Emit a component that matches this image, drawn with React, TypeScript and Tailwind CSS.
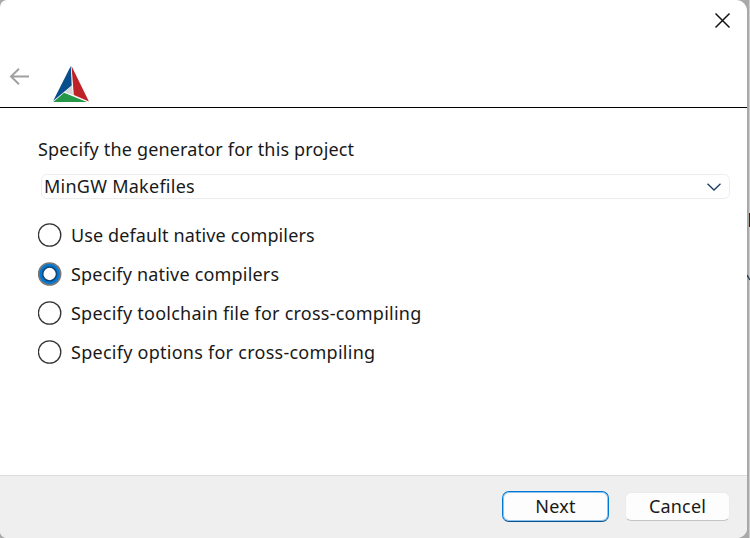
const options = [
  { label: 'Use default native compilers', spacing: 'tracking-[0.12px]' },
  { label: 'Specify native compilers', spacing: 'tracking-[0.19px]' },
  { label: 'Specify toolchain file for cross-compiling', spacing: 'tracking-[0.24px]' },
  { label: 'Specify options for cross-compiling', spacing: 'tracking-[0.26px]' },
];

function Radio({ checked }: { checked: boolean }) {
  return (
    <svg className="h-6 w-6 shrink-0" viewBox="0 0 24 24" fill="none">
      {checked ? (
        <>
          <circle cx="11.6" cy="12" r="11" fill="#0078d4" stroke="#7a7874" strokeWidth="1.7" />
          <circle cx="11.6" cy="12" r="6.9" fill="#fff" stroke="#124573" strokeWidth="1.5" />
        </>
      ) : (
        <circle cx="11.6" cy="12" r="11.2" fill="#fff" stroke="#333" strokeWidth="1.3" />
      )}
    </svg>
  );
}

export default function App() {
  return (
    <div className="relative h-[538px] w-[750px] overflow-hidden bg-linear-to-r from-[#a9a9a9] from-[749px] to-[#cfcfcf] to-[749px] font-['Noto_Sans','Open_Sans',sans-serif] text-[18px] leading-6 text-[#191919]">
      <div className="flex h-full w-[747px] flex-col overflow-hidden rounded-tl-[7px] rounded-tr-[11px] rounded-br-[10px] rounded-bl-[7px] bg-white">
        <header className="flex h-[108px] shrink-0 flex-col justify-between border-b border-black">
          <div className="flex justify-end pt-[12px] pr-[16px]">
            <svg className="h-[17px] w-4" viewBox="0 0 16 17" stroke="#111" strokeWidth="1.5">
              <path d="M.5 1.5 14.5 15.5M14.5 1.5 .5 15.5" />
            </svg>
          </div>
          <div className="flex items-end pb-[4px] pl-[9px]">
            <svg className="mb-[17px] h-[18px] w-5" viewBox="0 0 20 18" fill="none" stroke="#a0a0a0" strokeWidth="1.9">
              <path d="M20 8.5H2M10 .7 2 8.5 10 16.3" />
            </svg>
            <svg className="ml-[24px] h-[37px] w-[37px]" viewBox="0 0 37 37">
              <path d="M17.8 0 .1 35 18.7 19.6Z" fill="#064f8c" />
              <path d="M18.5 0 35.9 35.5 20.8 29Z" fill="#be2128" />
              <path d="M11 26.8 34 35.9H.3Z" fill="#249847" />
              <path d="M19 19.6 20 29 11.8 26Z" fill="#d7d7d9" />
            </svg>
          </div>
        </header>
        <main className="flex flex-1 flex-col pt-[29px] pr-[17px] pl-[38px]">
          <p className="tracking-[0.17px]">Specify the generator for this project</p>
          <div className="mt-[13px] ml-[3px] flex h-[25px] items-center justify-between rounded-[6px] border border-[#ececec] pr-[8px] pl-[2px]">
            <span className="mb-[2px] tracking-[0.26px]">MinGW Makefiles</span>
            <svg className="h-2 w-[14px]" viewBox="0 0 14 8" fill="none" stroke="#173e61" strokeWidth="1.3">
              <path d="M.5.7 7 7 13.5.7" />
            </svg>
          </div>
          <div className="mt-[24px] flex flex-col gap-[15px]">
            {options.map((o, i) => (
              <label key={o.label} className="flex h-6 items-center gap-[9px]">
                <Radio checked={i === 1} />
                <span className={o.spacing}>{o.label}</span>
              </label>
            ))}
          </div>
        </main>
        <footer className="flex h-[63px] shrink-0 items-start justify-end gap-[16px] border-t border-[#dcdcdc] bg-[#efefef] pt-[15px] pr-[17px]">
          <button className="flex h-[31px] w-[107px] items-center justify-center rounded-[7px] border border-[#0078d4] border-b-[#075290] bg-[#fdfdfd] pb-[2px] tracking-[0.2px] shadow-[inset_0_0_0_1px_#8fc3ec]">Next</button>
          <button className="mt-px flex h-[29px] w-[105px] items-center justify-center rounded-[6px] border border-[#ebebeb] border-b-[#c5c5c5] bg-[#fdfdfd] pb-[2px] tracking-[0.2px]">Cancel</button>
        </footer>
      </div>
      <div className="absolute top-[213px] left-[749px] h-[14px] w-px bg-[#4a1b10]" />
      <svg className="absolute top-[274px] left-[747px] h-2 w-[3px]" viewBox="0 0 3 8" stroke="#243b50" strokeWidth="1.3" fill="none">
        <path d="M0 1 3 6" />
      </svg>
    </div>
  );
}
